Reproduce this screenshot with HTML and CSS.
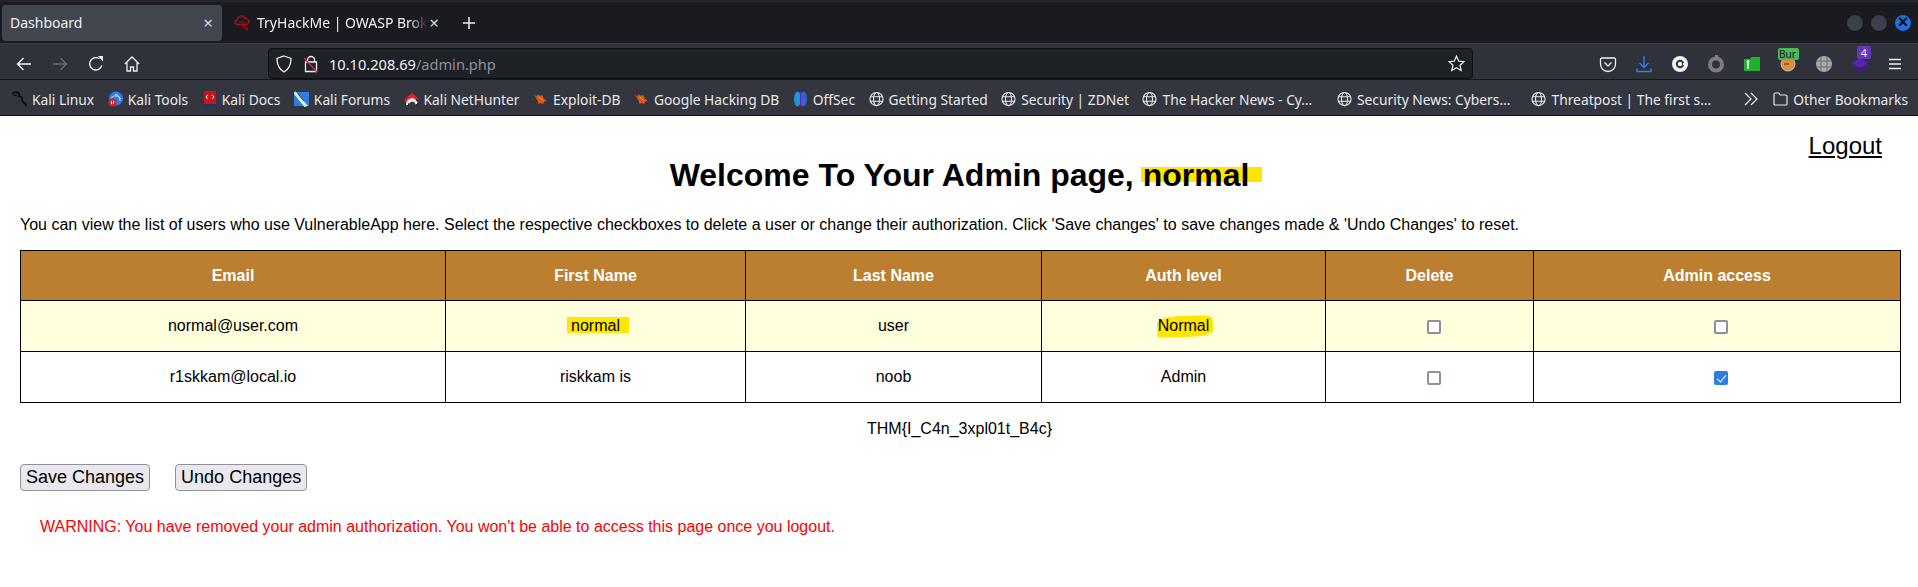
FILE: index.html
```html
<!DOCTYPE html>
<html lang="en">
<head>
<meta charset="utf-8">
<title>Dashboard</title>
<link rel="stylesheet" href="styles.css">
</head>
<body>
<svg class="defs" width="0" height="0" aria-hidden="true">
  <symbol id="globe" viewBox="0 0 16 16"><g fill="none" stroke="#e8e8ea" stroke-width="1.2"><circle cx="8" cy="8" r="7"/><ellipse cx="8" cy="8" rx="3.2" ry="7"/><path d="M1 5.6h14M1 10.4h14"/></g></symbol>
  <symbol id="flame" viewBox="0 0 16 16"><path d="M0 3.500l4 1.500 1-2 2 1.500 3-.5 1.500 3.500 3.500 3-3 0-1 2.500-3-.5-2.500.5-.5-3.500-2-2 1-.5z" fill="#d9591c"/><path d="M6 6l5 4" stroke="#f0965a"/></symbol>
</svg>
<header class="browser">
  <div class="tabbar">
    <div class="tab active"><span class="tab-title">Dashboard</span><span class="tab-x">×</span></div>
    <div class="tab inactive">
      <svg class="fav" width="16" height="17" viewBox="0 0 16 17"><path d="M3.500 10.500C.5 10.500 0 6.500 3 6c.5-4.500 6.500-5.500 8-1.500 4-1 5.500 6 1 6z" fill="none" stroke="#a3161c" stroke-width="1.300"/><path d="M5 8h6M8 12.500h5M10 14.500h4M12 16h2" fill="none" stroke="#8f1419" stroke-width="1.100"/></svg>
      <span class="tab-title fade">TryHackMe | OWASP Brok</span><span class="tab-x">×</span>
    </div>
    <svg class="plus" width="14" height="14" viewBox="0 0 14 14"><path d="M7 1v12M1 7h12" stroke="#f0f0f2" stroke-width="1.500"/></svg>
    <div class="winbtns"><i class="win"></i><i class="win"></i><i class="win close">×</i></div>
  </div>
  <div class="navbar">
    <div class="navbtns">
      <svg width="16" height="16" viewBox="0 0 16 16"><path d="M15 8H1.500M7.500 2l-6 6 6 6" fill="none" stroke="#f0f0f3" stroke-width="1.400"/></svg>
      <svg width="16" height="16" viewBox="0 0 16 16"><path d="M1 8h13.500M8.500 2l6 6-6 6" fill="none" stroke="#6c6e74" stroke-width="1.400"/></svg>
      <svg width="16" height="16" viewBox="0 0 16 16"><path d="M13.800 9.500A6.200 6.200 0 1 1 11.500 2.800" fill="none" stroke="#f0f0f3" stroke-width="1.400"/><path d="M10 0h5v5.500z" fill="#f0f0f3"/></svg>
      <svg width="16" height="16" viewBox="0 0 16 16"><path d="M.8 8L8 1l7.200 7M3 6.500V15h3.500v-4h3v4H13V6.500" fill="none" stroke="#f0f0f3" stroke-width="1.300"/></svg>
    </div>
    <div class="urlbar">
      <svg width="16" height="18" viewBox="0 0 16 18"><path d="M8 1l7 2.500c0 6-1.500 10.500-7 13.500-5.500-3-7-7.500-7-13.500z" fill="none" stroke="#f0f0f3" stroke-width="1.300"/></svg>
      <svg class="lock" width="14" height="18" viewBox="0 0 14 18"><path d="M3.500 7V5a3.500 3.500 0 0 1 7 0v2M1.500 7h11v9.500h-11z" fill="none" stroke="#f0f0f3" stroke-width="1.300"/><path d="M0 3l13 14" stroke="#e0245e" stroke-width="1.500"/></svg>
      <span class="url"><span class="host">10.10.208.69</span><span class="path">/admin.php</span></span>
      <svg class="star" width="17" height="17" viewBox="0 0 17 17"><path d="M8.500 1.200l2.200 4.900 5.300.6-4 3.500 1.200 5.300-4.700-2.800-4.700 2.800 1.200-5.300-4-3.500 5.300-.6z" fill="none" stroke="#f0f0f3" stroke-width="1.200"/></svg>
    </div>
    <div class="addons">
      <svg width="18" height="18" viewBox="0 0 18 18"><path d="M3 3h12a1.500 1.500 0 0 1 1.500 1.500V9a7.500 7.500 0 0 1-15 0V4.500A1.500 1.500 0 0 1 3 3z" fill="none" stroke="#f0f0f3" stroke-width="1.300"/><path d="M5.500 7.500L9 11l3.500-3.500" fill="none" stroke="#f0f0f3" stroke-width="1.300"/></svg>
      <svg width="18" height="18" viewBox="0 0 18 18"><path d="M9 1v11M4.500 8L9 12.500 13.500 8M2 13.500V16.500h14v-3" fill="none" stroke="#2f7cf6" stroke-width="1.400"/></svg>
      <svg width="18" height="18" viewBox="0 0 18 18"><circle cx="9" cy="9" r="8" fill="#f2f2f2"/><circle cx="9" cy="9" r="3.200" fill="none" stroke="#33363e" stroke-width="2"/><path d="M12 8h2v2h-2z" fill="#f2f2f2"/></svg>
      <svg width="18" height="18" viewBox="0 0 18 18"><circle cx="9" cy="9.500" r="6" fill="none" stroke="#7d7d7d" stroke-width="4"/><path d="M8 0h3v3H8z" fill="#7d7d7d"/></svg>
      <svg width="18" height="18" viewBox="0 0 18 18"><path d="M1 4h6l1.500-2H17v14H1z" fill="#1fb32b"/><path d="M5 6v8" stroke="#dff5df" stroke-width="2"/><path d="M3 7l2-2.500L7 7z" fill="#dff5df"/></svg>
      <span class="burp"><svg width="16" height="16" viewBox="0 0 16 16"><circle cx="8" cy="8" r="7" fill="#e38a3c" stroke="#c9c2b5"/><path d="M4 8h5" stroke="#333"/></svg><b class="burp-tag">Bur</b></span>
      <svg width="18" height="18" viewBox="0 0 18 18"><circle cx="9" cy="9" r="8" fill="#a9a9a9"/><path d="M1 6h16M1 12h16M6 1.500v15M12 1.500v15" stroke="#63656a" stroke-width=".9"/></svg>
      <span class="stack"><svg width="18" height="18" viewBox="0 0 18 18"><path d="M9 3l8 5-8 5-8-5z" fill="#5b21b6"/><path d="M2.500 10.500L9 14.500l6.500-4L17 12l-8 5-8-5z" fill="#3b1a9c"/></svg><b class="stack-tag">4</b></span>
      <svg width="16" height="14" viewBox="0 0 16 14"><path d="M2 2.500h12M2 7h12M2 11.500h12" stroke="#f0f0f3" stroke-width="1.400"/></svg>
    </div>
  </div>
  <nav class="bookmarks">
    <a class="bm"><svg width="15" height="16" viewBox="0 0 15 16"><path d="M0 3c1.500-1.500 4-2.500 6-1.500 2 1 1.500 3-.5 4M5.500 5.500c2-1 4-.5 4.500 1.500s-1 3 1 4 3 2 3.500 4.500M1.500 4.500c1-.5 2-.5 3 0" fill="none" stroke="#08080a" stroke-width="1.400"/></svg>Kali Linux</a>
    <a class="bm"><svg width="15" height="16" viewBox="0 0 15 16"><circle cx="8" cy="7.500" r="7" fill="#2a7de1"/><path d="M3 7c3-3 7-3 10 1M7 3c3 1 5 3 5 7" stroke="#d4e6fb" fill="none"/><circle cx="4.500" cy="11.500" r="4" fill="#d8232a"/><path d="M3.500 10v3M5.500 10v3" stroke="#fff"/></svg>Kali Tools</a>
    <a class="bm"><svg width="15" height="16" viewBox="0 0 15 16"><path d="M2 0h12v13H2z" fill="#cc1417"/><path d="M2 13h12v3H2z" fill="#26315e"/><path d="M6 4L4 6l2 2M10 4l2 2-2 2" stroke="#fff" fill="none"/></svg>Kali Docs</a>
    <a class="bm"><svg width="15" height="16" viewBox="0 0 15 16"><path d="M0 1h15v14H0z" fill="#2a7fe8"/><path d="M1 0l13 15-3.500 1L0 3z" fill="#e8eef4"/><path d="M4 3l6 7" stroke="#3c4048"/></svg>Kali Forums</a>
    <a class="bm"><svg width="15" height="16" viewBox="0 0 15 16"><path d="M0 9l8-7 7 6-7 0-4 5z" fill="#e3222f"/><path d="M2 14c0-5 5-8 9-6l3 4-2 2-2-3c-2-1-5 0-5 3z" fill="#ececec"/><path d="M4 15l1-3M12 14l2-2" stroke="#222"/></svg>Kali NetHunter</a>
    <a class="bm"><svg width="15" height="16"><use href="#flame"/></svg>Exploit-DB</a>
    <a class="bm"><svg width="15" height="16"><use href="#flame"/></svg>Google Hacking DB</a>
    <a class="bm"><svg width="15" height="16" viewBox="0 0 15 16"><ellipse cx="4.500" cy="8" rx="3.500" ry="7.500" fill="#1e93d6"/><ellipse cx="10.500" cy="8" rx="3.500" ry="7.500" fill="#3c5fd0"/><path d="M7.500 1v14" stroke="#5b2bb8"/></svg>OffSec</a>
    <a class="bm"><svg width="15" height="16"><use href="#globe"/></svg>Getting Started</a>
    <a class="bm"><svg width="15" height="16"><use href="#globe"/></svg>Security | ZDNet</a>
    <a class="bm trunc"><svg width="15" height="16"><use href="#globe"/></svg>The Hacker News - Cy…</a>
    <a class="bm trunc"><svg width="15" height="16"><use href="#globe"/></svg>Security News: Cybers…</a>
    <a class="bm trunc"><svg width="15" height="16"><use href="#globe"/></svg>Threatpost | The first s…</a>
    <span class="bm-right">
      <svg width="14" height="14" viewBox="0 0 14 14"><path d="M1 1l6 6-6 6M7 1l6 6-6 6" fill="none" stroke="#f0f0f3" stroke-width="1.200"/></svg>
      <a class="bm"><svg width="15" height="14" viewBox="0 0 15 14"><path d="M1 12V2.500A1.500 1.500 0 0 1 2.500 1h3.200l1.500 2h5.300A1.500 1.500 0 0 1 14 4.500V12a1 1 0 0 1-1 1H2a1 1 0 0 1-1-1z" fill="none" stroke="#e8e8ea" stroke-width="1.200"/></svg>Other Bookmarks</a>
    </span>
  </nav>
</header>
<main class="page">
  <div class="logout-row"><a class="logout" href="#">Logout</a></div>
  <h1 class="title">Welcome To Your Admin page, <span class="mark mark-h">normal</span></h1>
  <p class="intro">You can view the list of users who use VulnerableApp here. Select the respective checkboxes to delete a user or change their authorization. Click 'Save changes' to save changes made &amp; 'Undo Changes' to reset.</p>
  <table class="users">
    <colgroup>
      <col class="c1"><col class="c2"><col class="c3"><col class="c4"><col class="c5"><col class="c6">
    </colgroup>
    <thead>
      <tr><th>Email</th><th>First Name</th><th>Last Name</th><th>Auth level</th><th>Delete</th><th>Admin access</th></tr>
    </thead>
    <tbody>
      <tr class="odd">
        <td>normal@user.com</td>
        <td><span class="mark mark-f">normal</span></td>
        <td>user</td>
        <td><span class="mark mark-a">Normal</span></td>
        <td><input class="cb" type="checkbox" aria-label="Delete"></td>
        <td><input class="cb" type="checkbox" aria-label="Admin access"></td>
      </tr>
      <tr>
        <td>r1skkam@local.io</td>
        <td>riskkam is</td>
        <td>noob</td>
        <td>Admin</td>
        <td><input class="cb" type="checkbox" aria-label="Delete"></td>
        <td><input class="cb" type="checkbox" aria-label="Admin access" checked></td>
      </tr>
    </tbody>
  </table>
  <p class="flag">THM{I_C4n_3xpl01t_B4c}</p>
  <div class="actions">
    <button class="btn" type="button">Save Changes</button>
    <button class="btn" type="button">Undo Changes</button>
  </div>
  <p class="warning">WARNING: You have removed your admin authorization. You won't be able to access this page once you logout.</p>
</main>
</body>
</html>
```
FILE: styles.css
```css
* { box-sizing: border-box; }
html, body { margin: 0; height: 100%; }
body { background: #fff; color: #000; font-family: "Liberation Sans", Arial, sans-serif; overflow: hidden; }
.defs { position: absolute; }

.browser { font-family: "Noto Sans", sans-serif; color: #f0f0f3; font-size: 14px; }

.tabbar { height: 44px; background: #1a1b20; border-top: 2px solid #23262c; border-bottom: 1px solid #3a3d44; display: flex; align-items: center; padding: 0 6px 0 2px; }
.tab { height: 36px; display: flex; align-items: center; }
.tab.active { width: 220px; background: #42464e; border-radius: 4px; padding: 0 9px 0 8px; justify-content: space-between; }
.tab.inactive { width: 225px; padding: 0 8px 0 12px; gap: 7px; }
.tab-title { font-size: 14px; white-space: nowrap; }
.tab.inactive .tab-title { flex: 1; min-width: 0; margin-right: -5px; }
.fade { -webkit-mask-image: linear-gradient(90deg, #000 90%, transparent); mask-image: linear-gradient(90deg, #000 90%, transparent); }
.tab-x { font-size: 17px; line-height: 1; color: #d8d8dc; }
.plus { margin-left: 15px; }
.winbtns { margin-left: auto; display: flex; gap: 6px; }
.win { width: 18px; height: 18px; border-radius: 50%; background: #3a404c; border: 1px solid #14151a; display: block; font-style: normal; }
.win.close { background: #1f6fe0; color: #0b0b10; font: bold 18px/15px "Liberation Sans", sans-serif; text-align: center; }

.navbar { height: 36px; padding-top: 4px; background: #2f323a; display: flex; align-items: center; border-bottom: 1px solid #15161a; }
.navbtns { width: 268px; display: flex; align-items: center; gap: 20px; padding-left: 16px; }
.urlbar { width: 1205px; height: 31px; background: #1f2128; border: 1px solid #0e0f12; border-radius: 4px; display: flex; align-items: center; padding: 0 7px 0 7px; }
.lock { margin-left: 12px; }
.url { margin-left: 11px; font-size: 14.600px; flex: 1; }
.host { color: #f0f0f3; }
.path { color: #8d8f96; }
.addons { flex: 1; display: flex; align-items: center; gap: 18px; padding-left: 126px; }
.burp, .stack { position: relative; display: flex; width: 18px; height: 18px; align-items: center; justify-content: center; }
.burp-tag { position: absolute; left: -1px; top: -7px; width: 21px; height: 12px; background: #4bb85a; color: #111; font: 400 10px/12px "Noto Sans", sans-serif; border-radius: 2px; padding-left: 1px; }
.stack-tag { position: absolute; left: 6px; top: -9px; width: 14px; height: 13px; background: #6338b8; color: #f0e8ff; font: 400 11px/13px "Noto Sans", sans-serif; text-align: center; border-radius: 2px; }

.bookmarks { height: 36px; padding-top: 3px; background: #33363e; display: flex; align-items: center; padding-left: 12px; gap: 13.500px; border-bottom: 1px solid #101114; font-size: 13.800px; white-space: nowrap; }
.bm { display: flex; align-items: center; gap: 5px; color: #e9e9ec; }
.bm.trunc { width: 181px; }
.bm-right { margin-left: auto; display: flex; align-items: center; gap: 15px; padding-right: 10px; }

.page { padding: 0 19px 0 20px; }
.logout-row { display: flex; justify-content: flex-end; padding: 16px 17px 0 0; height: 41px; }
.logout { color: #000; font-size: 24px; line-height: 28px; height: 28px; text-decoration: underline; }
.title { margin: 0; text-align: center; font-size: 32px; line-height: 37px; font-weight: 700; }
.mark { position: relative; z-index: 0; display: inline-block; }
.mark::before { content: ""; position: absolute; z-index: -1; background: #ffe600; }
.mark-h::before { left: -2px; right: -13px; top: 10px; height: 15px; }
.mark-f::before { left: -4px; right: -9px; top: 0; height: 16px; border-radius: 1px; }
.mark-a::before { left: -1px; right: -3px; top: -1px; height: 21px; border-radius: 35% 20% 30% 10%; transform: rotate(-2deg); }
.intro { margin: 22px 0 0; font-size: 16px; line-height: 18px; }
.users { margin-top: 16px; width: 1880px; table-layout: fixed; border-collapse: collapse; font-size: 16px; }
.c1 { width: 425px; } .c2 { width: 300px; } .c3 { width: 296px; } .c4 { width: 284px; } .c5 { width: 208px; } .c6 { width: 367px; }
.users th, .users td { border: 1px solid #000; text-align: center; height: 51px; padding: 0; }
.users th { background: #bc7e2f; color: #fff; font-weight: 700; height: 50px; }
.odd td { background: #ffffdd; }
.cb { appearance: none; -webkit-appearance: none; width: 14px; height: 14px; margin: 0 0 0 8px; vertical-align: middle; position: relative; background: #fff; border: 2px solid #8f8f9d; border-radius: 2px; }
.cb:checked { background: #2f7fe0; border-color: #2f7fe0; }
.cb:checked::after { content: ""; position: absolute; left: 3px; top: 0; width: 4px; height: 8px; border: solid #fff; border-width: 0 1.500px 1.500px 0; transform: rotate(40deg); }
.flag { margin: 17px 0 0; text-align: center; font-size: 16px; line-height: 18px; }
.actions { margin-top: 26px; display: flex; gap: 25px; }
.btn { font: 18px "Liberation Sans", sans-serif; height: 27px; padding: 0 5px; color: #000; background: #e9e9ed; border: 1px solid #8f8f9d; border-radius: 4px; }
.warning { margin: 27px 0 0 20px; color: #f00; font-size: 16px; line-height: 18px; }
```
